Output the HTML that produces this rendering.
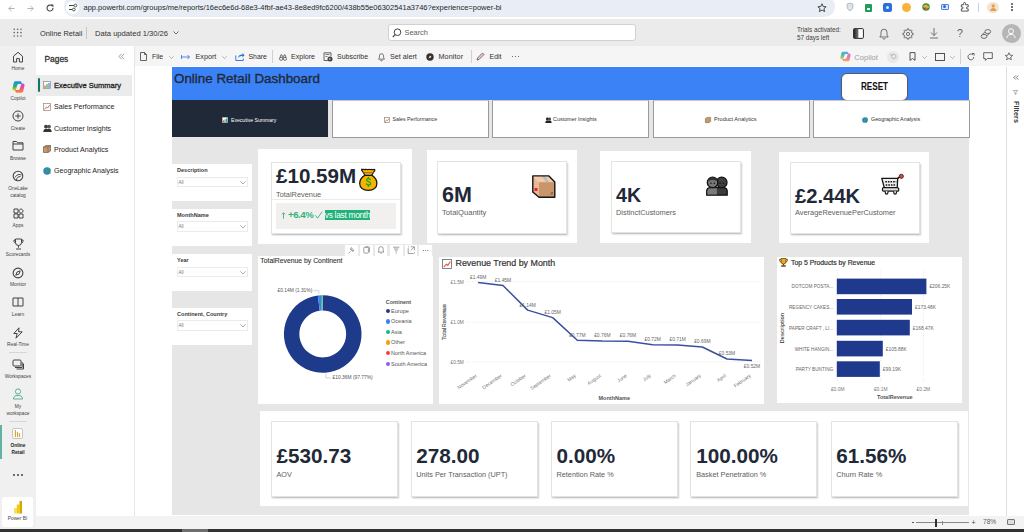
<!DOCTYPE html>
<html><head><meta charset="utf-8">
<style>
*{margin:0;padding:0;box-sizing:border-box}
html,body{width:1024px;height:532px;overflow:hidden;background:#fff;font-family:"Liberation Sans",sans-serif;color:#252423}
.a{position:absolute}
.t{position:absolute;white-space:nowrap;line-height:1}
svg{position:absolute;overflow:visible}
</style></head><body>
<!-- browser bar -->
<div class="a" style="left:0;top:0;width:1024px;height:19px;background:#fff"></div>
<div class="a" style="left:64px;top:-4px;width:771px;height:20.5px;border-radius:10px;background:#e9eef6"></div>
<div class="a" style="left:66px;top:1px;width:13px;height:13px;border-radius:7px;background:#fff"></div>
<div class="t" style="left:83.5px;top:3.5px;font-size:7.5px;color:#1f1f1f">app.powerbi.com/groups/me/reports/16ec6e6d-68e3-4fbf-ae43-8e8ed9fc6200/438b55e06302541a3746?experience=power-bi</div>


<svg style="left:8px;top:4.5px" width="7" height="7" viewBox="0 0 7 7"><path d="M6.6 3.5H.8M3.5.8L.8 3.5l2.7 2.7" fill="none" stroke="#a8adb3" stroke-width=".9"/></svg>
<svg style="left:27px;top:4.5px" width="7" height="7" viewBox="0 0 7 7"><path d="M.4 3.5h5.8M3.5.8l2.7 2.7-2.7 2.7" fill="none" stroke="#a8adb3" stroke-width=".9"/></svg>
<svg style="left:46px;top:4px" width="8" height="8" viewBox="0 0 8 8"><path d="M7 4A3 3 0 1 1 6 1.8" fill="none" stroke="#444" stroke-width="1.1"/><path d="M4.6.6h2.8v2.8z" fill="#444"/></svg>
<svg style="left:68px;top:3px" width="10" height="9" viewBox="0 0 10 9"><path d="M1 2.5h5M1 6.5h3" stroke="#444" stroke-width="1"/><circle cx="7.5" cy="2.5" r="1.4" fill="none" stroke="#444" stroke-width="0.9"/><circle cx="5.8" cy="6.5" r="1.4" fill="none" stroke="#444" stroke-width="0.9"/></svg>
<svg style="left:817px;top:2.5px" width="10" height="10" viewBox="0 0 10 10"><path d="M5 0.8l1.2 2.7 2.9.3-2.2 1.9.7 2.9L5 7.1 2.4 8.6l.7-2.9L.9 3.8l2.9-.3z" fill="none" stroke="#333" stroke-width="0.9"/></svg>
<svg style="left:845.5px;top:2px" width="8" height="10" viewBox="0 0 10 12"><path d="M5 1l3.6 1.4v3.4c0 2.4-1.6 3.9-3.6 4.8C3 9.7 1.4 8.2 1.4 5.8V2.4z" fill="#dfe3ea" stroke="#9aa3b2" stroke-width="0.9"/></svg>
<div class="a" style="left:864.8px;top:4px;width:7px;height:8px;background:#1e9e58;border-radius:1px"></div>
<div class="a" style="left:867px;top:7.5px;width:3px;height:2.5px;background:#fff"></div>
<div class="a" style="left:882.5px;top:2.5px;width:9px;height:9px;background:#2a6fdb;border-radius:2px"></div>
<div class="a" style="left:885.5px;top:5.5px;width:3px;height:3px;background:#dfe9fb;border-radius:2px"></div>
<div class="a" style="left:902px;top:2.5px;width:9px;height:9px;background:#fbb23a;border-radius:5px"></div>
<svg style="left:921px;top:2px" width="10" height="10" viewBox="0 0 12 12"><circle cx="6" cy="6" r="4.5" fill="#3d8f3d"/><path d="M2 5l4-2 4 3-3 3z" fill="#e8b43a"/><path d="M3 8l3-1 3 2" stroke="#c33" stroke-width="1" fill="none"/></svg>
<div class="a" style="left:940.5px;top:3.5px;width:8.5px;height:6.5px;border:1px solid #4a86e8;border-radius:1px;background:#dbe7fb"></div>
<div class="a" style="left:943.2px;top:5.3px;width:3px;height:3px;background:#3a5fd0;border-radius:2px"></div>
<svg style="left:959.5px;top:1.5px" width="10" height="10" viewBox="0 0 11 11"><path d="M1.5 3h2.5v-1.5a1 1 0 0 1 2 0V3h3v2.5h-1a1 1 0 0 0 0 2h1V10H1.5V7.5h1a1 1 0 0 0 0-2h-1z" fill="none" stroke="#333" stroke-width="0.9"/></svg>
<div class="a" style="left:978px;top:3px;width:1px;height:8.5px;background:#c5d3ea"></div>
<div class="a" style="left:987px;top:1.5px;width:11.5px;height:11.5px;background:#efe5d2;border-radius:6px"></div>
<svg style="left:988.5px;top:3px" width="8.5" height="8.5" viewBox="0 0 10 10"><circle cx="5" cy="3.5" r="2" fill="#e89b4a"/><path d="M1.5 9.5c0-2.5 1.5-3.5 3.5-3.5s3.5 1 3.5 3.5z" fill="#e89b4a"/></svg>
<div class="a" style="left:1011px;top:3px;width:1.6px;height:1.6px;background:#444;border-radius:1px;box-shadow:0 3px 0 #444,0 6px 0 #444"></div>

<!-- pbi header -->
<div class="a" style="left:0;top:19px;width:1024px;height:27px;background:#ebebeb"></div>
<div class="t" style="left:40px;top:29.8px;font-size:7.4px;color:#323130">Online Retail</div>
<div class="a" style="left:86px;top:27px;width:1px;height:12px;background:#c8c6c4"></div>
<div class="t" style="left:95px;top:29.8px;font-size:7.6px;color:#323130">Data updated 1/30/26</div>
<div class="a" style="left:388px;top:24px;width:248px;height:17px;border:1px solid #d1d1d1;border-radius:3px;background:#fff"></div>
<div class="t" style="left:404.5px;top:29px;font-size:7.4px;color:#605e5c">Search</div>
<div class="t" style="left:797px;top:25.5px;font-size:6.3px;color:#424242;line-height:8.5px">Trials activated:<br>57 days left</div>
<div class="a" style="left:1001.5px;top:23.5px;width:19px;height:19px;border-radius:10px;background:#b5b5b5"></div>


<svg style="left:13px;top:28px" width="10" height="10" viewBox="0 0 10 10" fill="#616161"><circle cx="1.2" cy="1.2" r=".8"/><circle cx="4.6" cy="1.2" r=".8"/><circle cx="8" cy="1.2" r=".8"/><circle cx="1.2" cy="4.6" r=".8"/><circle cx="4.6" cy="4.6" r=".8"/><circle cx="8" cy="4.6" r=".8"/><circle cx="1.2" cy="8" r=".8"/><circle cx="4.6" cy="8" r=".8"/><circle cx="8" cy="8" r=".8"/></svg>
<svg style="left:173px;top:31px" width="6" height="4" viewBox="0 0 6 4"><path d="M.5.5l2.5 2.5L5.5.5" fill="none" stroke="#616161" stroke-width=".9"/></svg>
<svg style="left:392px;top:28px" width="10" height="10" viewBox="0 0 10 10"><circle cx="5.5" cy="4.2" r="3.3" fill="none" stroke="#424242" stroke-width="1"/><path d="M3.2 6.6L.8 9" stroke="#424242" stroke-width="1.1"/></svg>
<svg style="left:852.5px;top:28px" width="11" height="11" viewBox="0 0 11 11"><defs><linearGradient id="spl" x1="0" y1="0" x2="1" y2="0"><stop offset="0" stop-color="#222"/><stop offset="1" stop-color="#777"/></linearGradient></defs><rect x=".6" y=".6" width="9.8" height="9.8" rx="1" fill="#fff" stroke="#242424" stroke-width="1"/><rect x=".6" y=".6" width="4.8" height="9.8" fill="url(#spl)"/></svg>
<svg style="left:878.5px;top:27.5px" width="10" height="12" viewBox="0 0 10 12"><path d="M5 1.2a3 3 0 0 1 3 3v3l1.2 1.8H.8L2 7.2v-3a3 3 0 0 1 3-3z" fill="none" stroke="#505050" stroke-width=".8"/><path d="M3.7 10.3a1.4 1.4 0 0 0 2.6 0" fill="none" stroke="#505050" stroke-width=".8"/></svg>
<svg style="left:902.3px;top:27.5px" width="12" height="12" viewBox="0 0 12 12"><path d="M9.91 5.14 L11.16 5.33 L11.16 6.67 L9.91 6.86 L9.37 8.16 L10.12 9.17 L9.17 10.12 L8.16 9.37 L6.86 9.91 L6.67 11.16 L5.33 11.16 L5.14 9.91 L3.84 9.37 L2.83 10.12 L1.88 9.17 L2.63 8.16 L2.09 6.86 L0.84 6.67 L0.84 5.33 L2.09 5.14 L2.63 3.84 L1.88 2.83 L2.83 1.88 L3.84 2.63 L5.14 2.09 L5.33 0.84 L6.67 0.84 L6.86 2.09 L8.16 2.63 L9.17 1.88 L10.12 2.83 L9.37 3.84Z" fill="none" stroke="#505050" stroke-width=".8" stroke-linejoin="round"/><circle cx="6" cy="6" r="1.6" fill="none" stroke="#505050" stroke-width=".8"/></svg>
<svg style="left:929px;top:27px" width="10" height="12" viewBox="0 0 10 12"><path d="M5 1v7.5M2 5.5l3 3 3-3M1 11h8" fill="none" stroke="#505050" stroke-width=".8"/></svg>
<div class="t" style="left:957px;top:27.5px;font-size:10.5px;color:#616161">?</div>
<svg style="left:979.5px;top:27.5px" width="12" height="12" viewBox="0 0 12 12"><ellipse cx="7.8" cy="3.6" rx="2.9" ry="2" fill="none" stroke="#505050" stroke-width=".8"/><ellipse cx="4" cy="8.4" rx="2.9" ry="2" fill="none" stroke="#505050" stroke-width=".8"/><path d="M5.3 4.5c-1.5.3-2.5 1-2.5 2M6.5 7.5c1.5-.3 2.5-1 2.6-2" fill="none" stroke="#505050" stroke-width=".8"/></svg>
<svg style="left:1005px;top:27px" width="12" height="12" viewBox="0 0 12 12"><circle cx="6" cy="4.2" r="2.5" fill="none" stroke="#fff" stroke-width="1"/><path d="M1.8 11c.4-2.6 2-3.6 4.2-3.6s3.8 1 4.2 3.6" fill="none" stroke="#fff" stroke-width="1"/></svg>

<!-- left nav -->
<div class="a" style="left:0;top:46px;width:36px;height:483px;background:#f0f0f0"></div>


<div class="t" style="left:0;top:67.2px;width:36px;text-align:center;font-size:4.8px;color:#424242">Home</div>
<svg style="left:12px;top:51px" width="12" height="12" viewBox="0 0 12 12"><path d="M1.5 5.2L6 1.3l4.5 3.9V11H7.4V7.6H4.6V11H1.5z" fill="none" stroke="#424242" stroke-width="1" stroke-linejoin="round"/></svg>
<div class="t" style="left:0;top:97.2px;width:36px;text-align:center;font-size:4.8px;color:#424242">Copilot</div>
<svg style="left:11.5px;top:80.5px" width="13" height="12" viewBox="0 0 13 12"><defs><linearGradient id="cgA" x1="0" y1="0" x2="0" y2="1"><stop offset="0" stop-color="#1d8cf0"/><stop offset=".55" stop-color="#27b36b"/><stop offset="1" stop-color="#f0c419"/></linearGradient><linearGradient id="cgB" x1="0" y1="0" x2="0" y2="1"><stop offset="0" stop-color="#b44be6"/><stop offset=".5" stop-color="#ef4f8f"/><stop offset="1" stop-color="#f98a2a"/></linearGradient></defs><path d="M3.5.3h4.5c.9 0 1.4.6 1.6 1.3l.4 1.3H6.8c-.8 0-1.3.5-1.5 1.2L3.6 9.5H2.2C1 9.5.3 8.6.5 7.5L1.7 2C2 .9 2.6.3 3.5.3z" fill="url(#cgA)"/><path d="M9.5 11.7H5c-.9 0-1.4-.6-1.6-1.3L3 9.1h3.2c.8 0 1.3-.5 1.5-1.2L9.4 2.5h1.4c1.2 0 1.9.9 1.7 2l-1.2 5.5c-.3 1.1-.9 1.7-1.8 1.7z" fill="url(#cgB)"/></svg>
<div class="t" style="left:0;top:127.2px;width:36px;text-align:center;font-size:4.8px;color:#424242">Create</div>
<svg style="left:12px;top:110px" width="12" height="12" viewBox="0 0 12 12"><circle cx="6" cy="6" r="5" fill="none" stroke="#424242" stroke-width="1"/><path d="M6 3.3v5.4M3.3 6h5.4" stroke="#424242" stroke-width="1"/></svg>
<div class="t" style="left:0;top:156.7px;width:36px;text-align:center;font-size:4.8px;color:#424242">Browse</div>
<svg style="left:12px;top:140px" width="12" height="11" viewBox="0 0 12 11"><path d="M1 1.5h3.5l1.2 1.3H11V10H1z M1 4h10" fill="none" stroke="#424242" stroke-width="1" stroke-linejoin="round"/></svg>
<div class="t" style="left:0;top:184.5px;width:36px;text-align:center;font-size:4.8px;color:#424242;line-height:7.4px">OneLake<br>catalog</div>
<svg style="left:12px;top:170px" width="12" height="12" viewBox="0 0 12 12"><circle cx="6" cy="6" r="4.8" fill="none" stroke="#424242" stroke-width="1.1"/><path d="M3 7.5c1.5-3 4.5-3.5 6.5-2.5M4.5 10c0-2 1.5-3.5 4-3.5" fill="none" stroke="#424242" stroke-width="1"/></svg>
<div class="t" style="left:0;top:223.7px;width:36px;text-align:center;font-size:4.8px;color:#424242">Apps</div>
<svg style="left:12.5px;top:208px" width="11" height="11" viewBox="0 0 11 11"><path d="M1 1h4v4H1zM1 6h4v4H1zM6 6h4v4H6z" fill="none" stroke="#424242" stroke-width="1"/><path d="M8 .6l2.4 2.4L8 5.4 5.6 3z" fill="none" stroke="#424242" stroke-width="1"/></svg>
<div class="t" style="left:0;top:253.2px;width:36px;text-align:center;font-size:4.8px;color:#424242">Scorecards</div>
<svg style="left:12.5px;top:237.5px" width="11" height="12" viewBox="0 0 11 12"><path d="M2.5 1h6v3.5a3 3 0 0 1-6 0zM2.5 2H1v1.3a1.6 1.6 0 0 0 1.6 1.6M8.5 2H10v1.3a1.6 1.6 0 0 1-1.6 1.6M5.5 7.5v2.2M3 11h5" fill="none" stroke="#424242" stroke-width="1"/></svg>
<div class="t" style="left:0;top:283.2px;width:36px;text-align:center;font-size:4.8px;color:#424242">Monitor</div>
<svg style="left:12px;top:267px" width="12" height="12" viewBox="0 0 12 12"><circle cx="6" cy="6" r="4.9" fill="none" stroke="#424242" stroke-width="1.1"/><path d="M3.8 8.2l1.2-3.2 3.2-1.2L7 7z" fill="none" stroke="#424242" stroke-width="1"/></svg>
<div class="t" style="left:0;top:313.2px;width:36px;text-align:center;font-size:4.8px;color:#424242">Learn</div>
<svg style="left:12px;top:297px" width="12" height="10" viewBox="0 0 12 10"><path d="M1 1h10v8H1zM6 1v8" fill="none" stroke="#424242" stroke-width="1"/></svg>
<div class="t" style="left:0;top:343.2px;width:36px;text-align:center;font-size:4.8px;color:#424242">Real-Time</div>
<svg style="left:12px;top:327px" width="12" height="12" viewBox="0 0 12 12"><path d="M7 .8L1.8 6.5h3.4L4 11.2l6.2-6.4H6.6z" fill="none" stroke="#424242" stroke-width="1" stroke-linejoin="round"/></svg>
<div class="a" style="left:9px;top:352px;width:18px;height:1px;background:#d6d6d6"></div>
<div class="t" style="left:0;top:375.2px;width:36px;text-align:center;font-size:4.8px;color:#424242">Workspaces</div>
<svg style="left:12px;top:359px" width="12" height="11" viewBox="0 0 12 11"><rect x="1" y="1" width="8" height="6" rx="1" fill="none" stroke="#424242" stroke-width="1"/><path d="M3 8.5h7.2V3.2M4.5 10h7V4.5" fill="none" stroke="#424242" stroke-width="1"/></svg>
<div class="t" style="left:0;top:402.5px;width:36px;text-align:center;font-size:4.8px;color:#424242;line-height:7.6px">My<br>workspace</div>
<svg style="left:12px;top:388px" width="12" height="12" viewBox="0 0 12 12"><circle cx="6" cy="3.5" r="2.6" fill="none" stroke="#4aa892" stroke-width=".9"/><path d="M1.5 11c0-2.5 1.6-3.6 4.5-3.6s4.5 1.1 4.5 3.6z" fill="none" stroke="#4aa892" stroke-width=".9"/></svg>
<div class="a" style="left:9px;top:421px;width:18px;height:1px;background:#d6d6d6"></div>
<div class="a" style="left:0;top:425px;width:2px;height:34px;background:#5fb3a0"></div>
<div class="a" style="left:12.2px;top:428px;width:10.5px;height:10.6px;border:1px solid #c8c6c4;border-radius:2px;background:#fff"></div>
<svg style="left:14px;top:429px" width="7" height="9" viewBox="0 0 7 9"><path d="M1.4 1.6v6M3.5 3.4v4.2M5.5 4.6v3" stroke="#d9a53a" stroke-width="1.2" stroke-linecap="round"/></svg>
<div class="t" style="left:0;top:441.7px;width:36px;text-align:center;font-size:4.8px;color:#242424;font-weight:bold;line-height:7.4px">Online<br>Retail</div>
<div class="a" style="left:13px;top:474px;width:2px;height:2px;background:#424242;border-radius:1px;box-shadow:4px 0 0 #424242,8px 0 0 #424242"></div>
<div class="a" style="left:2px;top:497px;width:31px;height:30px;background:#fff;border-radius:2px"></div>
<svg style="left:13px;top:500px" width="10" height="14" viewBox="0 0 10 14"><path d="M6.5 1h2.5v12.5H6.5z" fill="#d7a400"/><path d="M3.8 4.5h3v9h-3z" fill="#f2c811"/><path d="M1 8h3v5.5H1z" fill="#f8de5a"/></svg>
<div class="t" style="left:2px;top:517px;width:31px;text-align:center;font-size:4.8px;color:#424242">Power BI</div>

<!-- pages panel -->
<div class="a" style="left:36px;top:46px;width:98px;height:483px;background:#fff"></div>
<div class="a" style="left:134px;top:46px;width:1px;height:470px;background:#e6e6e6"></div>
<div class="t" style="left:44.5px;top:55px;font-size:8.4px;color:#323130;-webkit-text-stroke:.3px #323130">Pages</div>
<div class="a" style="left:36px;top:75px;width:96px;height:21px;background:#ebebeb"></div>
<div class="a" style="left:38px;top:78px;width:2px;height:14px;background:#117865;border-radius:1px"></div>


<svg style="left:118px;top:53px" width="7" height="7" viewBox="0 0 7 7"><path d="M3.5.8L1 3.5l2.5 2.7M6.2.8L3.7 3.5l2.5 2.7" fill="none" stroke="#8a8886" stroke-width=".8"/></svg>
<svg style="left:43px;top:81px" width="8" height="8" viewBox="0 0 8 8"><rect x=".5" y=".5" width="7" height="7" fill="#fff" stroke="#8a8886" stroke-width=".7"/><path d="M2 7V4.5" stroke="#e0533d" stroke-width="1.2"/><path d="M4 7V3" stroke="#3fae49" stroke-width="1.2"/><path d="M6 7V2" stroke="#3a86d8" stroke-width="1.2"/></svg>
<div class="t" style="left:54px;top:81.6px;font-size:7.55px;color:#242424;-webkit-text-stroke:.3px #242424">Executive Summary</div>
<svg style="left:43px;top:102.5px" width="8" height="8" viewBox="0 0 8 8"><rect x=".5" y=".5" width="7" height="7" fill="#fff" stroke="#8a8886" stroke-width=".7"/><path d="M1.5 6.5l2-2.5 1.2 1L6.8 2" fill="none" stroke="#e0533d" stroke-width=".9"/></svg>
<div class="t" style="left:54px;top:104.0px;font-size:7.1px;color:#242424">Sales Performance</div>
<svg style="left:42.5px;top:123.5px" width="9" height="8" viewBox="0 0 9 8"><circle cx="3" cy="2.6" r="1.9" fill="#3b3b3b"/><circle cx="6" cy="2.6" r="1.9" fill="#555"/><path d="M.3 8c0-2.5 1.2-3.3 2.7-3.3S5.7 5.5 5.7 8zM3.3 8c0-2.5 1.2-3.3 2.7-3.3S8.7 5.5 8.7 8z" fill="#333"/></svg>
<div class="t" style="left:54px;top:125.5px;font-size:7.1px;color:#242424">Customer Insights</div>
<svg style="left:43px;top:145px" width="8" height="8" viewBox="0 0 8 8"><path d="M.5 2L3 .5h4.5v5.5L5 7.5H.5z" fill="#c8976a" stroke="#5a4a3a" stroke-width=".6"/><path d="M.5 2h4.5v5.5M5 2l2.5-1.5" fill="none" stroke="#5a4a3a" stroke-width=".5"/></svg>
<div class="t" style="left:54px;top:146.5px;font-size:7.1px;color:#242424">Product Analytics</div>
<svg style="left:43px;top:166.5px" width="8" height="8" viewBox="0 0 8 8"><circle cx="4" cy="4" r="3.7" fill="#2f7fd1"/><path d="M1.5 2.5c1-.5 2 0 2.3 1s-.5 2-1.5 2.5M5 1c.5 1 1.5 1.2 2.5 1.8M5.5 5.5c.8 0 1.5.5 1.8 1" fill="none" stroke="#3aa655" stroke-width="1.4"/></svg>
<div class="t" style="left:54px;top:168.0px;font-size:7.1px;color:#242424">Geographic Analysis</div>

<!-- toolbar -->
<div class="a" style="left:135px;top:46px;width:889px;height:20px;background:#f5f5f5"></div>


<svg style="left:140px;top:52px" width="7" height="9" viewBox="0 0 7 9"><path d="M.5.5h4l2 2v6h-6z M4.5.5v2h2" fill="none" stroke="#424242" stroke-width=".8"/></svg>
<div class="t" style="left:152px;top:53.7px;font-size:6.9px;color:#323130">File</div>
<svg style="left:168.5px;top:55.5px" width="5" height="3" viewBox="0 0 5 3"><path d="M.3.3l2.2 2.2L4.7.3" fill="none" stroke="#8a8886" stroke-width=".6"/></svg>
<svg style="left:181px;top:54px" width="10" height="6" viewBox="0 0 10 6"><path d="M.5 3h8M6.5 1l2 2-2 2M.5 1v4" fill="none" stroke="#2a6fdb" stroke-width=".8"/></svg>
<div class="t" style="left:195.5px;top:53.2px;font-size:7.2px;color:#323130">Export</div>
<svg style="left:222px;top:55.5px" width="5" height="3" viewBox="0 0 5 3"><path d="M.3.3l2.2 2.2L4.7.3" fill="none" stroke="#8a8886" stroke-width=".6"/></svg>
<svg style="left:234.5px;top:51.5px" width="10" height="9" viewBox="0 0 10 9"><path d="M.8 3.5v5h7.5V6.5" fill="none" stroke="#2a6fdb" stroke-width=".9"/><path d="M3 6c.3-2.5 2-3.5 4.5-3.5V1l2 2.2-2 2.2V4C5.7 4 4 4.5 3 6z" fill="#2a6fdb"/></svg>
<div class="t" style="left:248.5px;top:53.7px;font-size:6.9px;color:#323130">Share</div>
<div class="a" style="left:272px;top:50px;width:1px;height:13px;background:#d1d1d1"></div>
<svg style="left:278.5px;top:53.5px" width="8" height="7" viewBox="0 0 9 8"><circle cx="2.3" cy="5.5" r="1.8" fill="none" stroke="#424242" stroke-width=".8"/><circle cx="6.7" cy="5.5" r="1.8" fill="none" stroke="#424242" stroke-width=".8"/><path d="M1 4.5L2 1h1.3l.7 3M8 4.5L7 1H5.7L5 4M4 4.3h1" fill="none" stroke="#424242" stroke-width=".8"/></svg>
<div class="t" style="left:291px;top:53.7px;font-size:7.1px;color:#323130">Explore</div>
<svg style="left:323px;top:51.5px" width="10" height="10" viewBox="0 0 10 10"><path d="M5 8.5H1V.8h7v3.5" fill="none" stroke="#424242" stroke-width=".8"/><path d="M2.5 2.5h4M2.5 4.5h2" stroke="#424242" stroke-width=".7"/><circle cx="7" cy="7" r="2.5" fill="#424242"/><path d="M6 6.2l2 .8-2 .8z" fill="#fff"/></svg>
<div class="t" style="left:337px;top:53.2px;font-size:7px;color:#323130">Subscribe</div>
<svg style="left:378px;top:52.5px" width="7" height="8" viewBox="0 0 8 9"><path d="M4 .8a2.4 2.4 0 0 1 2.4 2.4v2.3l1 1.5H.6l1-1.5V3.2A2.4 2.4 0 0 1 4 .8z" fill="none" stroke="#424242" stroke-width=".8"/><path d="M3 8a1 1 0 0 0 2 0" fill="none" stroke="#424242" stroke-width=".8"/></svg>
<div class="t" style="left:390px;top:53.2px;font-size:7.2px;color:#323130">Set alert</div>
<svg style="left:426px;top:52.5px" width="8" height="8" viewBox="0 0 8 8"><circle cx="4" cy="4" r="3.7" fill="#323130"/><path d="M2.5 5.5L4 2.5l1.5 1.5z" fill="#fff"/></svg>
<div class="t" style="left:438.5px;top:53.2px;font-size:7.2px;color:#323130;letter-spacing:.1px">Monitor</div>
<div class="a" style="left:471px;top:50px;width:1px;height:13px;background:#d1d1d1"></div>
<svg style="left:476px;top:52px" width="9" height="9" viewBox="0 0 9 9"><path d="M1 8l.5-2L6.5 1 8 2.5 3 7.5z" fill="#f3d9a4" stroke="#5a3e8c" stroke-width=".8" stroke-linejoin="round"/></svg>
<div class="t" style="left:489.5px;top:53.2px;font-size:7px;color:#323130">Edit</div>
<div class="a" style="left:512px;top:56px;width:1.4px;height:1.4px;background:#424242;border-radius:1px;box-shadow:3px 0 0 #424242,6px 0 0 #424242"></div>
<svg style="left:840px;top:51px" width="11" height="11" viewBox="0 0 13 12" opacity=".75"><defs><linearGradient id="cgC" x1="0" y1="0" x2="0" y2="1"><stop offset="0" stop-color="#1d8cf0"/><stop offset=".55" stop-color="#27b36b"/><stop offset="1" stop-color="#f0c419"/></linearGradient><linearGradient id="cgD" x1="0" y1="0" x2="0" y2="1"><stop offset="0" stop-color="#b44be6"/><stop offset=".5" stop-color="#ef4f8f"/><stop offset="1" stop-color="#f98a2a"/></linearGradient></defs><path d="M3.5.3h4.5c.9 0 1.4.6 1.6 1.3l.4 1.3H6.8c-.8 0-1.3.5-1.5 1.2L3.6 9.5H2.2C1 9.5.3 8.6.5 7.5L1.7 2C2 .9 2.6.3 3.5.3z" fill="url(#cgC)"/><path d="M9.5 11.7H5c-.9 0-1.4-.6-1.6-1.3L3 9.1h3.2c.8 0 1.3-.5 1.5-1.2L9.4 2.5h1.4c1.2 0 1.9.9 1.7 2l-1.2 5.5c-.3 1.1-.9 1.7-1.8 1.7z" fill="url(#cgD)"/></svg>
<div class="t" style="left:854.3px;top:53.7px;font-size:7.6px;color:#a19f9d">Copilot</div>
<div class="a" style="left:887px;top:50.5px;width:12px;height:12px;background:#e8e8e8;border-radius:6px"></div>
<svg style="left:889.5px;top:53px" width="7" height="7" viewBox="0 0 7 7"><path d="M1.5 3.5a2.2 2.2 0 1 0 .8-1.7M1 .8v1.6h1.6" fill="none" stroke="#a19f9d" stroke-width=".7"/></svg>
<svg style="left:908.5px;top:52px" width="7" height="9" viewBox="0 0 7 9"><path d="M1 .6h5v7.8L3.5 6.5 1 8.4z" fill="none" stroke="#424242" stroke-width=".9"/></svg>
<svg style="left:922px;top:55.5px" width="5" height="3" viewBox="0 0 5 3"><path d="M.3.3l2.2 2.2L4.7.3" fill="none" stroke="#8a8886" stroke-width=".6"/></svg>
<svg style="left:935px;top:52.5px" width="10" height="8" viewBox="0 0 10 8"><rect x=".5" y=".5" width="9" height="7" fill="none" stroke="#424242" stroke-width=".9"/></svg>
<svg style="left:949.5px;top:55.5px" width="5" height="3" viewBox="0 0 5 3"><path d="M.3.3l2.2 2.2L4.7.3" fill="none" stroke="#8a8886" stroke-width=".6"/></svg>
<div class="a" style="left:960px;top:49px;width:1px;height:15px;background:#d1d1d1"></div>
<svg style="left:966.5px;top:52.5px" width="8" height="8" viewBox="0 0 8 8"><path d="M6.8 4A2.9 2.9 0 1 1 5.9 1.8M5 .5h2.1v2.1" fill="none" stroke="#424242" stroke-width=".8"/></svg>
<svg style="left:983px;top:52px" width="10" height="9" viewBox="0 0 10 9"><path d="M.7.7h8.6v5.8H4.5L2.3 8.3V6.5H.7z" fill="none" stroke="#424242" stroke-width=".8" stroke-linejoin="round"/></svg>
<svg style="left:1004px;top:52px" width="10" height="9" viewBox="0 0 10 10"><path d="M5 .8l1.2 2.7 2.9.3-2.2 1.9.7 2.9L5 7.1 2.4 8.6l.7-2.9L.9 3.8l2.9-.3z" fill="none" stroke="#424242" stroke-width=".8"/></svg>

<!-- canvas -->
<div class="a" style="left:172px;top:67px;width:797px;height:448px;background:#e6e6e6"></div>
<div class="a" style="left:172px;top:67px;width:797px;height:33px;background:#3b82f6"></div>
<div class="t" style="left:174px;top:72px;font-size:13.4px;color:#1f2937;-webkit-text-stroke:.35px #1f2937">Online Retail Dashboard</div>
<div class="a" style="left:841px;top:72.5px;width:67px;height:28px;background:#fff;border:1px solid #5a5a5a;border-radius:6px;box-shadow:0 1px 1px rgba(0,0,0,.2)"></div>
<div class="t" style="left:841px;top:81.2px;width:67px;text-align:center;font-size:10.6px;font-weight:bold;color:#111;transform:scaleX(.77)">RESET</div>
<div class="a" style="left:172px;top:100px;width:156px;height:37px;background:#1f2937"></div>
<svg style="left:222px;top:116.5px" width="6" height="6" viewBox="0 0 8 8"><rect x=".5" y=".5" width="7" height="7" fill="#fff" stroke="#aaa" stroke-width=".7"/><path d="M2 7V4.5" stroke="#e0533d" stroke-width="1.4"/><path d="M4 7V3" stroke="#3fae49" stroke-width="1.4"/><path d="M6 7V2" stroke="#3a86d8" stroke-width="1.4"/></svg>
<div class="t" style="left:231px;top:117.6px;font-size:5.1px;color:#fff">Executive Summary</div>
<div class="a" style="left:332px;top:100px;width:157px;height:37.5px;background:#fff;border:1px solid #9a9a9a;border-top-color:#c8c8c8"></div>
<svg style="left:384px;top:116.5px" width="6" height="6" viewBox="0 0 8 8"><rect x=".5" y=".5" width="7" height="7" fill="#fff" stroke="#777" stroke-width=".8"/><path d="M1.5 6.5l2-2.5 1.2 1L6.8 2" fill="none" stroke="#e0533d" stroke-width="1"/></svg>
<div class="t" style="left:392.5px;top:117.3px;font-size:5.25px;color:#333">Sales Performance</div>
<div class="a" style="left:492px;top:100px;width:157px;height:37.5px;background:#fff;border:1px solid #9a9a9a;border-top-color:#c8c8c8"></div>
<svg style="left:544.5px;top:116.5px" width="7" height="6" viewBox="0 0 9 8"><circle cx="3" cy="2.6" r="1.9" fill="#222"/><circle cx="6" cy="2.6" r="1.9" fill="#444"/><path d="M.3 8c0-2.5 1.2-3.3 2.7-3.3S5.7 5.5 5.7 8zM3.3 8c0-2.5 1.2-3.3 2.7-3.3S8.7 5.5 8.7 8z" fill="#222"/></svg>
<div class="t" style="left:553px;top:117.3px;font-size:5.45px;color:#333">Customer Insights</div>
<div class="a" style="left:653px;top:100px;width:157px;height:37.5px;background:#fff;border:1px solid #9a9a9a;border-top-color:#c8c8c8"></div>
<svg style="left:704.5px;top:116.5px" width="6" height="6" viewBox="0 0 8 8"><path d="M.5 2L3 .5h4.5v5.5L5 7.5H.5z" fill="#c8976a" stroke="#5a4a3a" stroke-width=".6"/></svg>
<div class="t" style="left:714px;top:117.3px;font-size:5.55px;color:#333">Product Analytics</div>
<div class="a" style="left:813px;top:100px;width:157px;height:37.5px;background:#fff;border:1px solid #9a9a9a;border-top-color:#c8c8c8"></div>
<svg style="left:862px;top:116.5px" width="6" height="6" viewBox="0 0 8 8"><circle cx="4" cy="4" r="3.8" fill="#2f7fd1"/><path d="M1.5 2.5c1-.5 2 0 2.3 1s-.5 2-1.5 2.5M5 1c.5 1 1.5 1.2 2.5 1.8" fill="none" stroke="#3aa655" stroke-width="1.6"/></svg>
<div class="t" style="left:871px;top:117.3px;font-size:5.4px;color:#333">Geographic Analysis</div>


<div class="a" style="left:172px;top:164.4px;width:80px;height:37px;background:#fff"></div>
<div class="t" style="left:177px;top:168.2px;font-size:5.55px;font-weight:bold;color:#3a3a3a">Description</div>
<div class="a" style="left:176.5px;top:176.70000000000002px;width:71px;height:10.5px;border:1px solid #ebebeb;background:#fff"></div>
<div class="t" style="left:178.5px;top:180.8px;font-size:4.6px;color:#777">All</div>
<svg style="left:240px;top:180.70000000000002px" width="6" height="3.5" viewBox="0 0 6 3.5"><path d="M.3.3L3 3 5.7.3" fill="none" stroke="#777" stroke-width=".6"/></svg>
<div class="a" style="left:172px;top:208.8px;width:80px;height:37px;background:#fff"></div>
<div class="t" style="left:177px;top:212.6px;font-size:5.55px;font-weight:bold;color:#3a3a3a">MonthName</div>
<div class="a" style="left:176.5px;top:221.10000000000002px;width:71px;height:10.5px;border:1px solid #ebebeb;background:#fff"></div>
<div class="t" style="left:178.5px;top:225.2px;font-size:4.6px;color:#777">All</div>
<svg style="left:240px;top:225.10000000000002px" width="6" height="3.5" viewBox="0 0 6 3.5"><path d="M.3.3L3 3 5.7.3" fill="none" stroke="#777" stroke-width=".6"/></svg>
<div class="a" style="left:172px;top:254.3px;width:80px;height:37px;background:#fff"></div>
<div class="t" style="left:177px;top:258.1px;font-size:5.55px;font-weight:bold;color:#3a3a3a">Year</div>
<div class="a" style="left:176.5px;top:266.6px;width:71px;height:10.5px;border:1px solid #ebebeb;background:#fff"></div>
<div class="t" style="left:178.5px;top:270.7px;font-size:4.6px;color:#777">All</div>
<svg style="left:240px;top:270.6px" width="6" height="3.5" viewBox="0 0 6 3.5"><path d="M.3.3L3 3 5.7.3" fill="none" stroke="#777" stroke-width=".6"/></svg>
<div class="a" style="left:172px;top:308px;width:80px;height:37px;background:#fff"></div>
<div class="t" style="left:177px;top:311.8px;font-size:5.55px;font-weight:bold;color:#3a3a3a">Continent, Country</div>
<div class="a" style="left:176.5px;top:320.3px;width:71px;height:10.5px;border:1px solid #ebebeb;background:#fff"></div>
<div class="t" style="left:178.5px;top:324.4px;font-size:4.6px;color:#777">All</div>
<svg style="left:240px;top:324.3px" width="6" height="3.5" viewBox="0 0 6 3.5"><path d="M.3.3L3 3 5.7.3" fill="none" stroke="#777" stroke-width=".6"/></svg>

<!-- KPI row 1 -->
<div class="a" style="left:257.7px;top:149px;width:154.3px;height:95px;background:#fff"></div>
<div class="a" style="left:271px;top:161.5px;width:129.5px;height:72px;background:#fff;border:1px solid #e3e3e3;box-shadow:1px 1.5px 1.5px rgba(40,50,70,.28)"></div>
<div class="t" style="left:276px;top:166px;font-size:20.6px;font-weight:bold;color:#1f2937">£10.59M</div>
<svg style="left:359.3px;top:167.6px" width="19" height="23" viewBox="0 0 19 23"><path d="M6.2 7C2.3 9.3.7 12.3.7 15.6c0 4.2 3.5 6.7 8.6 6.7s8.6-2.5 8.6-6.7c0-3.3-1.6-6.3-5.5-8.6z" fill="#f5b400" stroke="#151515" stroke-width="1.3" stroke-linejoin="round"/><path d="M2.8 1.2c1 .6 1.6-.3 2.5.2.9.5 1.7-.4 2.6.1.9.4 1.7-.4 2.6 0 .9.4 1.7-.4 2.6 0 .9.5 1.5-.3 2.5 0 .6.5.2 1.3-.5 2L13 6.8l.2.5H5.5l.2-.5-2.1-3.3c-.7-.6-1.4-1.6-.8-2.3z" fill="#f5b400" stroke="#151515" stroke-width="1.2" stroke-linejoin="round"/><path d="M4.4 4.7h10.2" stroke="#9c6a2a" stroke-width="1.1"/><path d="M11.3 11.6c-.4-.7-1.1-1-1.9-1-1.1 0-1.8.6-1.8 1.4 0 1.8 4 1.3 4 3.4 0 1-.8 1.6-2.1 1.6-.9 0-1.7-.4-2.1-1.1M9.4 9.3v1.3M9.4 17v1.4" fill="none" stroke="#1ea52c" stroke-width="1.3" stroke-linecap="round"/></svg>
<div class="t" style="left:276px;top:190.5px;font-size:7.4px;color:#605e5c">TotalRevenue</div>
<div class="a" style="left:272px;top:199px;width:127.5px;height:1px;background:#ececec"></div>
<div class="a" style="left:276px;top:203px;width:120px;height:25.5px;background:#f2f0ef"></div>
<svg style="left:280.5px;top:211.5px" width="5" height="7" viewBox="0 0 5 7"><path d="M2.5 6.7V.8M1 2.3L2.5.8 4 2.3" fill="none" stroke="#2cb47c" stroke-width=".9"/></svg>
<div class="t" style="left:288px;top:210px;font-size:9.6px;font-weight:bold;color:#2cb47c;letter-spacing:-.45px">+6.4%</div>
<svg style="left:315px;top:211px" width="8" height="8" viewBox="0 0 8 8"><path d="M.6 4.3l2 2.9L7.2.6" fill="none" stroke="#2cb47c" stroke-width=".9"/></svg>
<div class="a" style="left:324.6px;top:209.6px;width:45.7px;height:10.3px;background:#1fb27a"></div>
<div class="t" style="left:324.8px;top:210.6px;font-size:8.4px;color:#fff;letter-spacing:-.3px">vs last month</div>

<div class="a" style="left:426.5px;top:150.3px;width:150px;height:92.7px;background:#fff"></div>
<div class="a" style="left:437px;top:160.7px;width:130px;height:73.3px;background:#fff;border:1px solid #e3e3e3;box-shadow:1px 1.5px 1.5px rgba(40,50,70,.28)"></div>
<div class="t" style="left:442px;top:185px;font-size:21.5px;font-weight:bold;color:#1f2937">6M</div>
<div class="t" style="left:442px;top:208.5px;font-size:7.6px;color:#605e5c">TotalQuantity</div>
<svg style="left:531.5px;top:175px" width="24" height="24" viewBox="0 0 24 24"><path d="M.8.9h16.1l5.9 6.2H7z" fill="#f2cbaa"/><path d="M.8.9L7 7.1v15.2L.8 17z" fill="#e9b996"/><path d="M7 7.1h15.8v15.2H7z" fill="#c9966b"/><path d="M10 .9h3l4 6.2h-3z" fill="#b9b9bd"/><rect x="2.5" y="13" width="3" height="3" fill="#e8213a"/><path d="M18 19h3M19 17.5h2" stroke="#555" stroke-width=".7"/><path d="M.8.9h16.1l5.9 6.2v15.2H7L.8 17z" fill="none" stroke="#141414" stroke-width="1.4" stroke-linejoin="round"/></svg>

<div class="a" style="left:600.3px;top:151px;width:150.3px;height:91.7px;background:#fff"></div>
<div class="a" style="left:611px;top:161.3px;width:130.3px;height:71.7px;background:#fff;border:1px solid #e3e3e3;box-shadow:1px 1.5px 1.5px rgba(40,50,70,.28)"></div>
<div class="t" style="left:616px;top:185.6px;font-size:19.6px;font-weight:bold;color:#1f2937">4K</div>
<div class="t" style="left:616px;top:208.5px;font-size:7.4px;color:#605e5c">DistinctCustomers</div>
<svg style="left:706px;top:175.5px" width="23" height="20" viewBox="0 0 23 20"><path d="M.7 19.2v-4c0-2.3 1.5-3.6 4-3.6h12.4c2.5 0 4.1 1.3 4.1 3.6v4z" fill="#3c3c3c" stroke="#111" stroke-width="1.3" stroke-linejoin="round"/><path d="M1.4 18.6v-3.4c0-1.8 1.1-2.9 3.3-2.9h6.2v6.3z" fill="#7a7a7a"/><circle cx="15.7" cy="6.4" r="5.3" fill="#3e3e3e" stroke="#111" stroke-width="1.3"/><circle cx="6.6" cy="6.4" r="5.3" fill="#777" stroke="#111" stroke-width="1.3"/><path d="M2.2 5.3C3 2.5 4.6 1.3 6.6 1.3s3.6 1.2 4.4 4c-1.5-1-3-1.4-4.4-1.4S3.7 4.3 2.2 5.3z" fill="#333"/><circle cx="5" cy="7.2" r=".75" fill="#111"/><circle cx="8.3" cy="7.2" r=".75" fill="#111"/><circle cx="14" cy="7.2" r=".75" fill="#111"/><circle cx="17.4" cy="7.2" r=".75" fill="#111"/></svg>

<div class="a" style="left:779.3px;top:152px;width:150px;height:90.8px;background:#fff"></div>
<div class="a" style="left:790px;top:162.3px;width:130px;height:71.8px;background:#fff;border:1px solid #e3e3e3;box-shadow:1px 1.5px 1.5px rgba(40,50,70,.28)"></div>
<div class="t" style="left:795px;top:185.8px;font-size:20.2px;font-weight:bold;color:#1f2937">£2.44K</div>
<div class="t" style="left:795px;top:209px;font-size:7.4px;color:#605e5c">AverageRevenuePerCustomer</div>
<svg style="left:881px;top:173px" width="24" height="23" viewBox="0 0 24 23"><path d="M.8 5.4h15.9l-.5 9.6H3.4z" fill="#eee" stroke="#141414" stroke-width="1.3" stroke-linejoin="round"/><path d="M16.7 5.4L19.8 3" stroke="#141414" stroke-width="1.4"/><circle cx="20.3" cy="3.3" r="2.1" fill="#e2432e" stroke="#222" stroke-width=".8"/><path d="M4.3 8.8h11M4.7 12h10.3" stroke="#141414" stroke-width="1.5" stroke-dasharray="1.6 1"/><path d="M1.5 15.6c0-.7.3-1 1-1h13.6c.9 0 1.6.4 1.6 1.2v1.4c0 .6-.4 1-1 1H2.6c-.7 0-1.1-.4-1.1-1z" fill="#ddd" stroke="#141414" stroke-width="1.2"/><path d="M4.3 18.3v1.5a1.3 1.3 0 0 0 2.6 0v-1.5M12.8 18.3v1.5a1.3 1.3 0 0 0 2.6 0v-1.5" fill="#fff" stroke="#141414" stroke-width="1.2"/></svg>


<!-- donut card -->
<div class="a" style="left:258px;top:256px;width:175.2px;height:147.5px;background:#fff"></div>
<div class="a" style="left:344px;top:244px;width:89px;height:12px;background:#e9e9e9"></div>
<div class="a" style="left:344.9px;top:244.5px;width:12.8px;height:11.5px;background:#fff"></div>
<div class="a" style="left:360px;top:244.5px;width:12.8px;height:11.5px;background:#fff"></div>
<div class="a" style="left:374.7px;top:244.5px;width:12.8px;height:11.5px;background:#fff"></div>
<div class="a" style="left:389.8px;top:244.5px;width:12.8px;height:11.5px;background:#fff"></div>
<div class="a" style="left:404.6px;top:244.5px;width:12.8px;height:11.5px;background:#fff"></div>
<div class="a" style="left:419.3px;top:244.5px;width:12.8px;height:11.5px;background:#fff"></div>
<svg style="left:0;top:0" width="1024" height="532" fill="none" stroke="#777" stroke-width=".7">
<path d="M348.4 253.5l2.2-2.2M350 248.8l3 3M351.2 247.6l2.8 2.8-1.2.5-2.1-2.1z" stroke-linejoin="round"/>
<rect x="363.8" y="247.3" width="4.6" height="5.8" rx=".8"/><path d="M365.3 246.8h3.4a.8.8 0 0 1 .8.8v4.6"/>
<path d="M381 246.6a2.2 2.2 0 0 1 2.2 2.2v2.3l.8 1h-6l.8-1v-2.3a2.2 2.2 0 0 1 2.2-2.2zM380.3 253.2h1.4"/>
<path d="M393 247.2h6.4M394 249h4.4M395 250.8h2.4M396.2 252.2v1.3"/>
<path d="M408.2 248.2v5.3h5.3M410.8 246.8h3.6v3.6M414.2 247l-3.3 3.3M408.2 246.8h1M414.4 252.2v1.3"/>
</svg>
<div class="a" style="left:423px;top:249.6px;width:1.2px;height:1.2px;background:#555;border-radius:1px;box-shadow:2.2px 0 0 #555,4.4px 0 0 #555"></div>
<div class="t" style="left:260.3px;top:258.4px;font-size:6.85px;color:#333;-webkit-text-stroke:.1px #333">TotalRevenue by Continent</div>
<svg style="left:0;top:0" width="1024" height="532"><path d="M322.70 295.20A38.8 38.8 0 1 1 317.83 295.51L319.76 310.79A23.4 23.4 0 1 0 322.70 310.60Z" fill="#1e3a8a"/><path d="M317.83 295.51A38.8 38.8 0 0 1 321.01 295.24L321.68 310.62A23.4 23.4 0 0 0 319.76 310.79Z" fill="#3b82f6"/><path d="M321.01 295.24A38.8 38.8 0 0 1 322.36 295.20L322.50 310.60A23.4 23.4 0 0 0 321.68 310.62Z" fill="#10b981"/><path d="M322.36 295.20A38.8 38.8 0 0 1 322.70 295.20L322.70 310.60A23.4 23.4 0 0 0 322.50 310.60Z" fill="#f59e0b"/>
<path d="M313.6 290.6H318.8v3.3" fill="none" stroke="#aaa" stroke-width=".5"/>
<path d="M326 373.5v4.5h5" fill="none" stroke="#aaa" stroke-width=".5"/>
</svg>
<div class="t" style="left:277.5px;top:289.2px;font-size:4.9px;color:#555">£0.14M (1.31%)</div>
<div class="t" style="left:332.5px;top:375.5px;font-size:4.9px;color:#555">£10.36M (97.77%)</div>
<div class="t" style="left:385.8px;top:299.6px;font-size:5.45px;font-weight:bold;color:#555">Continent</div>
<div class="a" style="left:386px;top:309.1px;width:4.4px;height:4.4px;border-radius:50%;background:#1e3a8a"></div>
<div class="t" style="left:391px;top:308.9px;font-size:5.55px;color:#555">Europe</div>
<div class="a" style="left:386px;top:319.4px;width:4.4px;height:4.4px;border-radius:50%;background:#3b82f6"></div>
<div class="t" style="left:391px;top:319.2px;font-size:5.55px;color:#555">Oceania</div>
<div class="a" style="left:386px;top:330.1px;width:4.4px;height:4.4px;border-radius:50%;background:#10b981"></div>
<div class="t" style="left:391px;top:329.9px;font-size:5.55px;color:#555">Asia</div>
<div class="a" style="left:386px;top:340.4px;width:4.4px;height:4.4px;border-radius:50%;background:#f59e0b"></div>
<div class="t" style="left:391px;top:340.2px;font-size:5.55px;color:#555">Other</div>
<div class="a" style="left:386px;top:350.7px;width:4.4px;height:4.4px;border-radius:50%;background:#ef4444"></div>
<div class="t" style="left:391px;top:350.5px;font-size:5.55px;color:#555">North America</div>
<div class="a" style="left:386px;top:362.1px;width:4.4px;height:4.4px;border-radius:50%;background:#8b5cf6"></div>
<div class="t" style="left:391px;top:361.9px;font-size:5.55px;color:#555">South America</div>

<!-- trend card -->
<div class="a" style="left:439px;top:256.6px;width:324.5px;height:147px;background:#fff"></div>
<svg style="left:442px;top:258.5px" width="10" height="10" viewBox="0 0 10 10"><rect x=".5" y=".5" width="9" height="9" fill="#fff" stroke="#666" stroke-width=".8"/><path d="M1.8 8.2l2.5-3 1.5 1.2L8.4 2.5" fill="none" stroke="#e0533d" stroke-width="1.1"/></svg>
<div class="t" style="left:455.5px;top:258.6px;font-size:8.9px;color:#333;-webkit-text-stroke:.2px #333">Revenue Trend by Month</div>
<svg style="left:0;top:0" width="1024" height="532">
<path d="M467 281.6H762M467 322.2H762M467 361.8H762" stroke="#d8d8d8" stroke-width=".6" stroke-dasharray="1 1.5"/>
<polyline points="478.1,282.5 503,285.5 527.7,310.1 552.7,317.6 577.3,340.2 602.3,341.1 628,341.2 652.7,344.8 677.7,345.1 702.3,347 727,359 752,360.5" fill="none" stroke="#3a4fa0" stroke-width="1.5" stroke-linejoin="round"/>
</svg>
<div class="t" style="left:450.5px;top:280.8px;font-size:4.8px;color:#777">£1.5M</div>
<div class="t" style="left:450.5px;top:321.2px;font-size:4.8px;color:#777">£1.0M</div>
<div class="t" style="left:450.5px;top:360.5px;font-size:4.8px;color:#777">£0.5M</div>
<div class="t" style="left:444.5px;top:322px;font-size:5.9px;color:#555;-webkit-text-stroke:.15px #555;transform:translate(-50%,-50%) rotate(-90deg)">TotalRevenue</div>
<div class="t" style="left:598.5px;top:395.5px;font-size:5.5px;font-weight:bold;color:#555">MonthName</div>
<div class="t" style="left:478.1px;top:277.5px;font-size:4.9px;color:#666;transform:translate(-50%,-50%)">£1.49M</div>
<div class="t" style="left:476.6px;top:376px;font-size:4.9px;color:#777;transform:translate(-100%,-50%) rotate(-35deg);transform-origin:100% 50%">November</div>
<div class="t" style="left:503px;top:281.0px;font-size:4.9px;color:#666;transform:translate(-50%,-50%)">£1.45M</div>
<div class="t" style="left:501.5px;top:376px;font-size:4.9px;color:#777;transform:translate(-100%,-50%) rotate(-35deg);transform-origin:100% 50%">December</div>
<div class="t" style="left:527.7px;top:306.0px;font-size:4.9px;color:#666;transform:translate(-50%,-50%)">£1.14M</div>
<div class="t" style="left:526.2px;top:376px;font-size:4.9px;color:#777;transform:translate(-100%,-50%) rotate(-35deg);transform-origin:100% 50%">October</div>
<div class="t" style="left:552.7px;top:313.0px;font-size:4.9px;color:#666;transform:translate(-50%,-50%)">£1.05M</div>
<div class="t" style="left:551.2px;top:376px;font-size:4.9px;color:#777;transform:translate(-100%,-50%) rotate(-35deg);transform-origin:100% 50%">September</div>
<div class="t" style="left:577.3px;top:336.0px;font-size:4.9px;color:#666;transform:translate(-50%,-50%)">£0.77M</div>
<div class="t" style="left:575.8px;top:376px;font-size:4.9px;color:#777;transform:translate(-100%,-50%) rotate(-35deg);transform-origin:100% 50%">May</div>
<div class="t" style="left:602.3px;top:336.0px;font-size:4.9px;color:#666;transform:translate(-50%,-50%)">£0.76M</div>
<div class="t" style="left:600.8px;top:376px;font-size:4.9px;color:#777;transform:translate(-100%,-50%) rotate(-35deg);transform-origin:100% 50%">August</div>
<div class="t" style="left:628px;top:336.0px;font-size:4.9px;color:#666;transform:translate(-50%,-50%)">£0.76M</div>
<div class="t" style="left:626.5px;top:376px;font-size:4.9px;color:#777;transform:translate(-100%,-50%) rotate(-35deg);transform-origin:100% 50%">June</div>
<div class="t" style="left:652.7px;top:340.0px;font-size:4.9px;color:#666;transform:translate(-50%,-50%)">£0.72M</div>
<div class="t" style="left:651.2px;top:376px;font-size:4.9px;color:#777;transform:translate(-100%,-50%) rotate(-35deg);transform-origin:100% 50%">July</div>
<div class="t" style="left:677.7px;top:340.0px;font-size:4.9px;color:#666;transform:translate(-50%,-50%)">£0.71M</div>
<div class="t" style="left:676.2px;top:376px;font-size:4.9px;color:#777;transform:translate(-100%,-50%) rotate(-35deg);transform-origin:100% 50%">March</div>
<div class="t" style="left:702.3px;top:342.0px;font-size:4.9px;color:#666;transform:translate(-50%,-50%)">£0.69M</div>
<div class="t" style="left:700.8px;top:376px;font-size:4.9px;color:#777;transform:translate(-100%,-50%) rotate(-35deg);transform-origin:100% 50%">January</div>
<div class="t" style="left:727px;top:354.2px;font-size:4.9px;color:#666;transform:translate(-50%,-50%)">£0.53M</div>
<div class="t" style="left:725.5px;top:376px;font-size:4.9px;color:#777;transform:translate(-100%,-50%) rotate(-35deg);transform-origin:100% 50%">April</div>
<div class="t" style="left:752px;top:366.9px;font-size:4.9px;color:#666;transform:translate(-50%,-50%)">£0.52M</div>
<div class="t" style="left:750.5px;top:376px;font-size:4.9px;color:#777;transform:translate(-100%,-50%) rotate(-35deg);transform-origin:100% 50%">February</div>

<!-- bar card -->
<div class="a" style="left:776.6px;top:256.6px;width:185px;height:146.8px;background:#fff"></div>
<svg style="left:779.3px;top:257.8px" width="9" height="9" viewBox="0 0 9 9"><path d="M2 .5h5v3a2.5 2.5 0 0 1-5 0z" fill="#f0a81c" stroke="#5a3c00" stroke-width=".7"/><path d="M2 1.3H.6v.9A1.7 1.7 0 0 0 2.3 4M7 1.3h1.4v.9A1.7 1.7 0 0 1 6.7 4" fill="none" stroke="#5a3c00" stroke-width=".8"/><path d="M4.5 6v1.5" stroke="#5a3c00" stroke-width="1.2"/><rect x="2.2" y="7.3" width="4.6" height="1.4" fill="#5a3c00"/></svg>
<div class="t" style="left:791px;top:260.3px;font-size:6.85px;color:#333;-webkit-text-stroke:.2px #333">Top 5 Products by Revenue</div>
<svg style="left:0;top:0" width="1024" height="532">
<path d="M837.2 270V381M880.7 270V381M923.4 270V381" stroke="#d8d8d8" stroke-width=".6" stroke-dasharray="1 1.5"/>
<rect x="836.8" y="278.6" width="89.6" height="15.6" fill="#1f3a8c"/>
<rect x="836.8" y="299" width="75.2" height="15.6" fill="#1f3a8c"/>
<rect x="836.8" y="319.8" width="73.0" height="15.6" fill="#1f3a8c"/>
<rect x="836.8" y="340.8" width="46.0" height="15.6" fill="#1f3a8c"/>
<rect x="836.8" y="361.3" width="43.0" height="15.6" fill="#1f3a8c"/>
</svg>
<div class="t" style="left:833.2px;top:287.4px;font-size:4.7px;color:#666;transform:translate(-100%,-50%)">DOTCOM POSTA...</div>
<div class="t" style="left:929.4px;top:287.4px;font-size:4.9px;color:#666;transform:translateY(-50%)">£206.25K</div>
<div class="t" style="left:833.2px;top:307.8px;font-size:4.7px;color:#666;transform:translate(-100%,-50%)">REGENCY CAKES...</div>
<div class="t" style="left:915px;top:307.8px;font-size:4.9px;color:#666;transform:translateY(-50%)">£173.48K</div>
<div class="t" style="left:833.2px;top:328.6px;font-size:4.7px;color:#666;transform:translate(-100%,-50%)">PAPER CRAFT , LI...</div>
<div class="t" style="left:912.8px;top:328.6px;font-size:4.9px;color:#666;transform:translateY(-50%)">£168.47K</div>
<div class="t" style="left:833.2px;top:349.6px;font-size:4.7px;color:#666;transform:translate(-100%,-50%)">WHITE HANGIN...</div>
<div class="t" style="left:885.8px;top:349.6px;font-size:4.9px;color:#666;transform:translateY(-50%)">£105.88K</div>
<div class="t" style="left:833.2px;top:370.1px;font-size:4.7px;color:#666;transform:translate(-100%,-50%)">PARTY BUNTING</div>
<div class="t" style="left:882.8px;top:370.1px;font-size:4.9px;color:#666;transform:translateY(-50%)">£99.19K</div>
<div class="t" style="left:837.7px;top:389.8px;font-size:4.9px;color:#777;transform:translate(-50%,-50%)">£0.0M</div>
<div class="t" style="left:880.7px;top:389.8px;font-size:4.9px;color:#777;transform:translate(-50%,-50%)">£0.1M</div>
<div class="t" style="left:923.4px;top:389.8px;font-size:4.9px;color:#777;transform:translate(-50%,-50%)">£0.2M</div>
<div class="t" style="left:894.8px;top:398px;font-size:5.5px;font-weight:bold;color:#555;transform:translate(-50%,-50%)">TotalRevenue</div>
<div class="t" style="left:782.6px;top:327.6px;font-size:5.5px;font-weight:bold;color:#555;transform:translate(-50%,-50%) rotate(-90deg)">Description</div>

<!-- bottom KPI row -->
<div class="a" style="left:260px;top:410.6px;width:707.6px;height:95px;background:#fff"></div>
<div class="a" style="left:270.6px;top:421.3px;width:127px;height:75.5px;background:#fff;border:1px solid #e3e3e3;box-shadow:1px 1.5px 1.5px rgba(40,50,70,.28)"></div>
<div class="t" style="left:276.40000000000003px;top:445.6px;font-size:20.7px;font-weight:bold;color:#1f2937">£530.73</div>
<div class="t" style="left:276.40000000000003px;top:470.5px;font-size:7.3px;color:#605e5c">AOV</div>
<div class="a" style="left:410.5px;top:421.3px;width:127px;height:75.5px;background:#fff;border:1px solid #e3e3e3;box-shadow:1px 1.5px 1.5px rgba(40,50,70,.28)"></div>
<div class="t" style="left:416.3px;top:445.6px;font-size:20.7px;font-weight:bold;color:#1f2937">278.00</div>
<div class="t" style="left:416.3px;top:470.5px;font-size:7.3px;color:#605e5c">Units Per Transaction (UPT)</div>
<div class="a" style="left:550.7px;top:421.3px;width:127px;height:75.5px;background:#fff;border:1px solid #e3e3e3;box-shadow:1px 1.5px 1.5px rgba(40,50,70,.28)"></div>
<div class="t" style="left:556.5px;top:445.6px;font-size:20.7px;font-weight:bold;color:#1f2937">0.00%</div>
<div class="t" style="left:556.5px;top:470.5px;font-size:7.3px;color:#605e5c">Retention Rate %</div>
<div class="a" style="left:690.4px;top:421.3px;width:127px;height:75.5px;background:#fff;border:1px solid #e3e3e3;box-shadow:1px 1.5px 1.5px rgba(40,50,70,.28)"></div>
<div class="t" style="left:696.1999999999999px;top:445.6px;font-size:20.7px;font-weight:bold;color:#1f2937">100.00%</div>
<div class="t" style="left:696.1999999999999px;top:470.5px;font-size:7.3px;color:#605e5c">Basket Penetration %</div>
<div class="a" style="left:830.5px;top:421.3px;width:127px;height:75.5px;background:#fff;border:1px solid #e3e3e3;box-shadow:1px 1.5px 1.5px rgba(40,50,70,.28)"></div>
<div class="t" style="left:836.3px;top:445.6px;font-size:20.7px;font-weight:bold;color:#1f2937">61.56%</div>
<div class="t" style="left:836.3px;top:470.5px;font-size:7.3px;color:#605e5c">Churn Rate %</div>

<!-- filters pane -->
<svg style="left:1012.5px;top:74.5px" width="6" height="5" viewBox="0 0 6 5"><path d="M2.8.5L.8 2.5l2 2M5.3.5l-2 2 2 2" fill="none" stroke="#444" stroke-width=".7"/></svg>
<svg style="left:1013px;top:90px" width="5" height="5" viewBox="0 0 5 5"><path d="M.3.5h4.4L3 2.5v2L2 4V2.5z" fill="none" stroke="#666" stroke-width=".5"/></svg>
<div class="t" style="left:1015.5px;top:111.8px;font-size:7.3px;font-weight:bold;color:#3b3a39;transform:translate(-50%,-50%) rotate(90deg)">Filters</div>

<div class="a" style="left:1006px;top:67px;width:1px;height:449px;background:#e1dfdd"></div>

<!-- status bar -->
<div class="a" style="left:36px;top:515.5px;width:988px;height:13px;background:#f3f3f3"></div>
<div class="a" style="left:0;top:528.5px;width:1024px;height:3.5px;background:#333"></div><div class="a" style="left:182px;top:529px;width:26px;height:3px;background:#6e6e6e"></div>
<div class="a" style="left:912px;top:522px;width:2px;height:1px;background:#555"></div>
<div class="a" style="left:916px;top:522px;width:52.5px;height:1px;background:#8a8886"></div>
<div class="a" style="left:935.2px;top:518.5px;width:2px;height:8px;background:#323130"></div>
<div class="a" style="left:942px;top:520.5px;width:1px;height:4px;background:#8a8886"></div>
<div class="t" style="left:971.5px;top:519px;font-size:7px;color:#444">+</div>
<div class="t" style="left:983px;top:519px;font-size:6.6px;color:#605e5c">78%</div>
<div class="a" style="left:1006.5px;top:519px;width:8px;height:6px;border:1px solid #777;border-radius:1px;background:#ddd"></div>

</body></html>
